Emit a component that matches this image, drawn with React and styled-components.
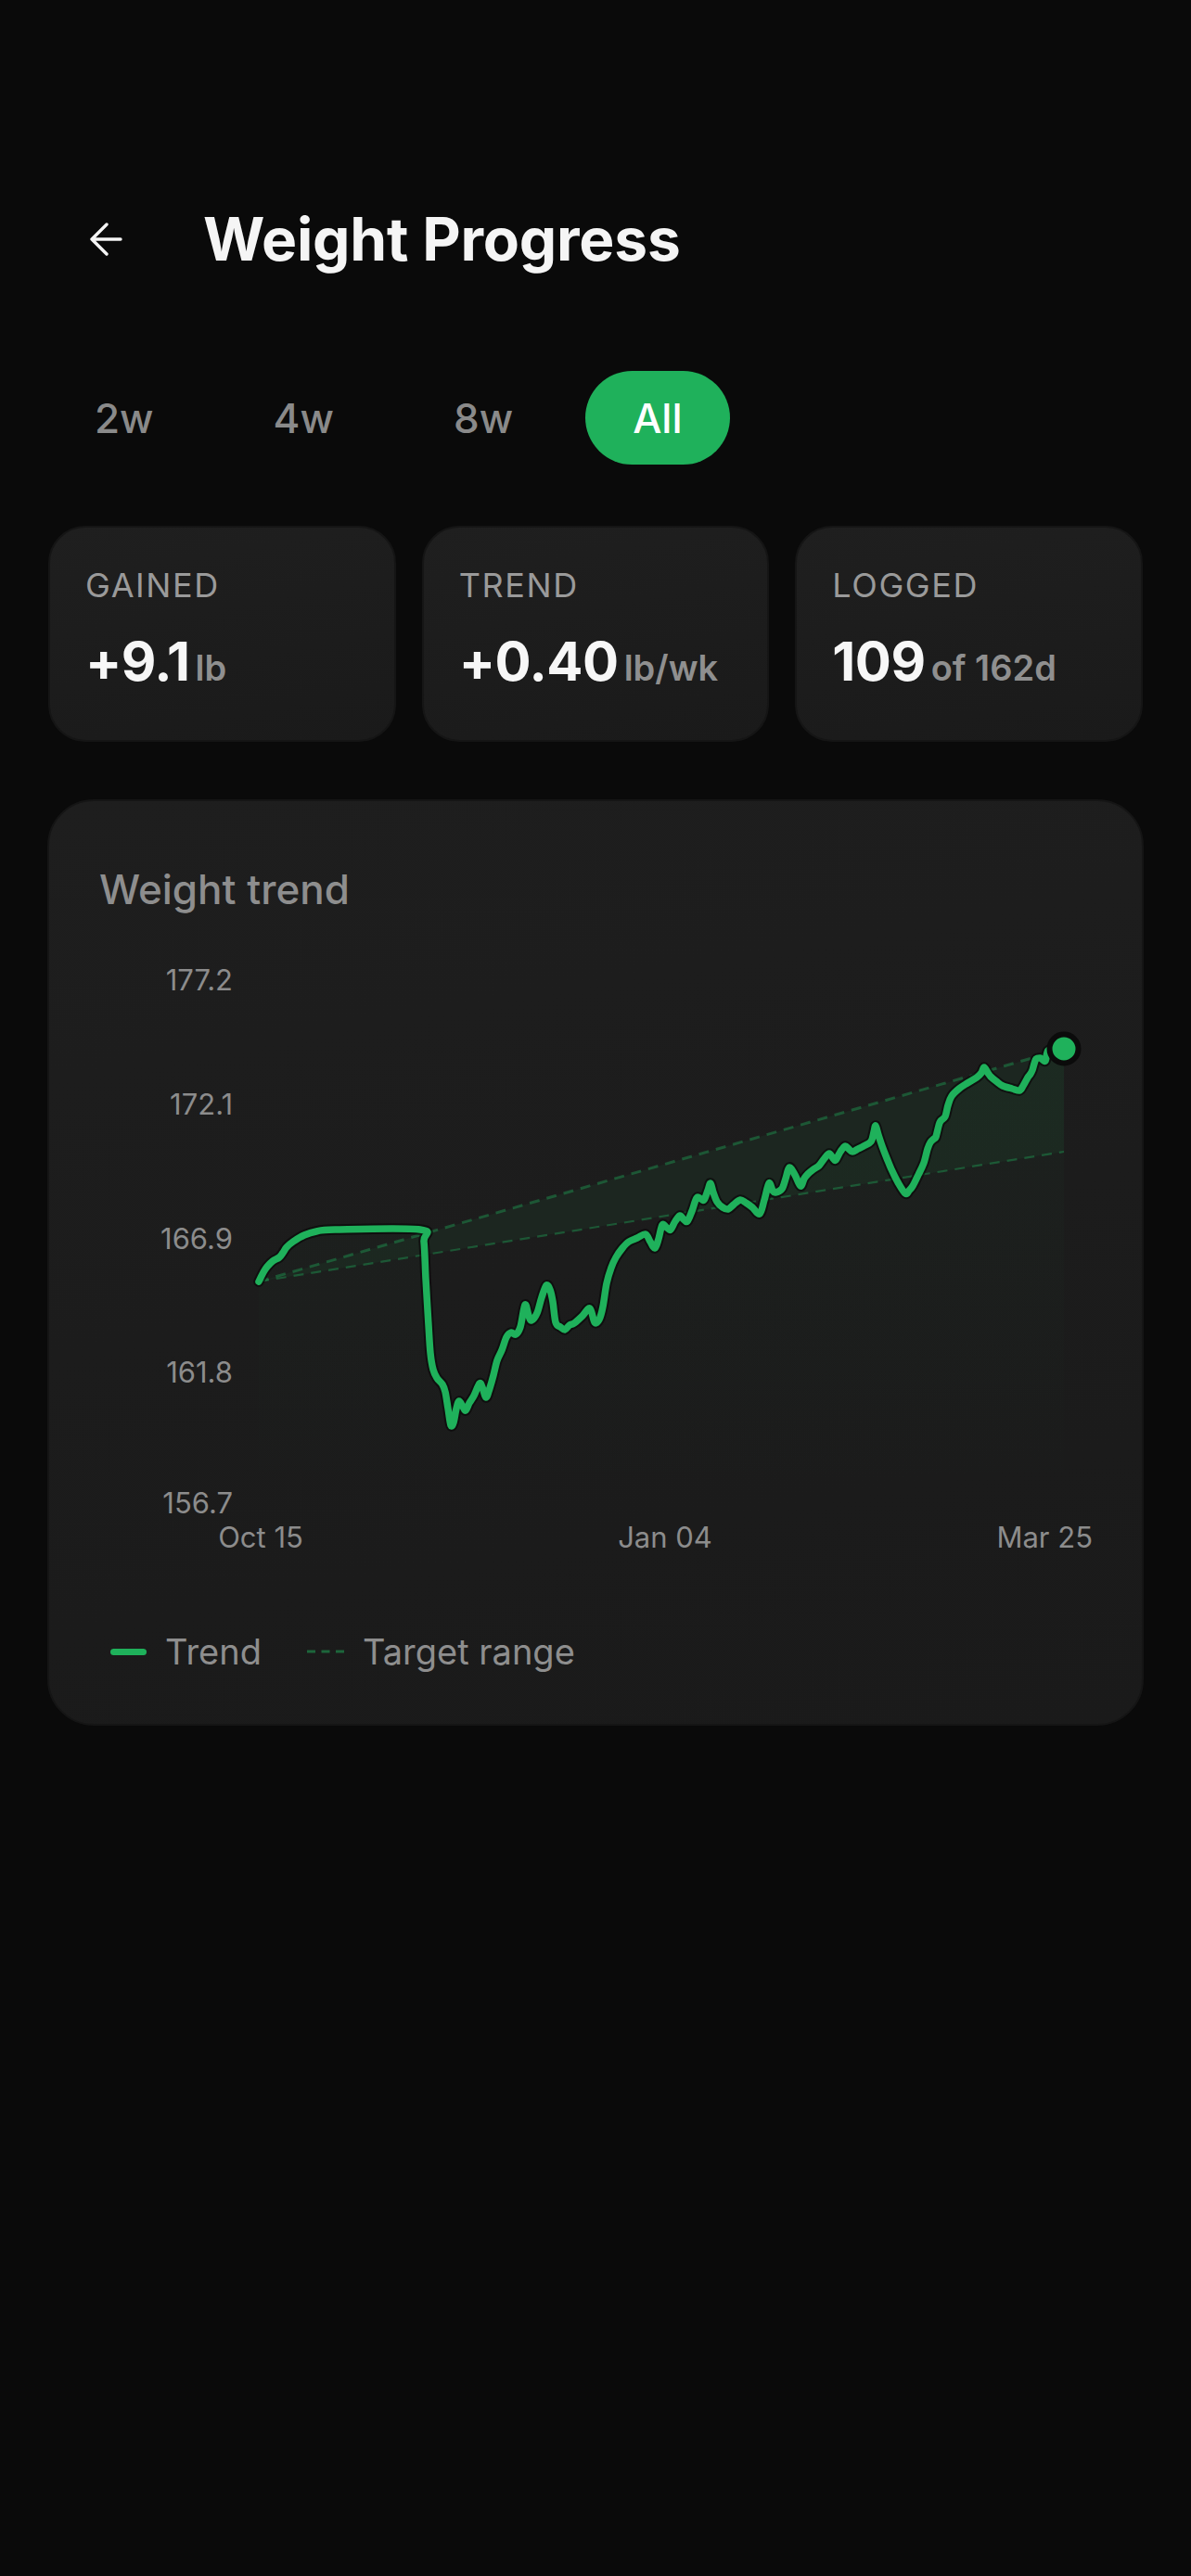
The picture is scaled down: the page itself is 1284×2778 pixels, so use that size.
import React from "react";
import styled, { createGlobalStyle } from "styled-components";

const GREEN = "#1fb15b";

const GlobalStyle = createGlobalStyle`
  html, body {
    margin: 0;
    padding: 0;
    background: #0a0a0a;
  }
  body {
    font-family: Inter, "Noto Sans", sans-serif;
    color: #f5f5f5;
    -webkit-font-smoothing: antialiased;
  }
`;

// trend points, in page pixels
const TREND = [
  [278, 1383], [283, 1373], [287, 1367], [293, 1361], [300, 1357], [304, 1352],
  [308, 1346], [315, 1340], [327, 1333], [340, 1329], [360, 1327], [452, 1327],
  [456, 1340], [458, 1380], [461, 1430], [463, 1460], [466, 1478], [470, 1487],
  [476, 1494], [479, 1502], [482, 1520], [485, 1538], [488, 1535], [491, 1520],
  [494, 1512], [498, 1518], [501, 1522], [505, 1514], [510, 1506], [516, 1493],
  [519, 1497], [523, 1508], [527, 1498], [531, 1484], [535, 1468], [540, 1457],
  [545, 1443], [550, 1438], [555, 1440], [560, 1432], [565, 1408], [569, 1420],
  [572, 1425], [578, 1417], [583, 1400], [588, 1387], [592, 1392], [595, 1405],
  [598, 1427], [603, 1432], [608, 1435], [613, 1430], [618, 1428], [627, 1420],
  [635, 1412], [640, 1427], [645, 1424], [649, 1410], [653, 1385], [658, 1368],
  [663, 1357], [670, 1347], [677, 1340], [686, 1336], [695, 1332], [700, 1340],
  [705, 1347], [709, 1337], [713, 1322], [718, 1325], [722, 1327], [727, 1318],
  [732, 1312], [736, 1316], [740, 1318], [745, 1307], [750, 1293], [755, 1294],
  [758, 1295], [762, 1285], [765, 1277], [768, 1287], [772, 1297], [778, 1303],
  [784, 1305], [790, 1300], [797, 1295], [803, 1298], [810, 1303], [818, 1310],
  [823, 1295], [828, 1277], [832, 1285], [835, 1287], [842, 1283], [846, 1272],
  [850, 1260], [856, 1268], [862, 1280], [866, 1272], [870, 1267], [876, 1262],
  [882, 1258], [888, 1250], [893, 1245], [897, 1250], [900, 1252], [905, 1243],
  [910, 1237], [914, 1240], [918, 1243], [924, 1240], [930, 1237], [938, 1232],
  [941, 1222], [943, 1215], [946, 1225], [950, 1237], [955, 1250], [960, 1262],
  [967, 1276], [975, 1288], [979, 1285], [983, 1280], [989, 1268], [995, 1255],
  [999, 1240], [1002, 1233], [1006, 1229], [1008, 1227], [1011, 1215], [1013, 1210],
  [1018, 1205], [1021, 1193], [1025, 1183], [1033, 1175], [1042, 1169], [1052, 1163],
  [1057, 1158], [1060, 1152], [1064, 1158], [1067, 1162], [1073, 1167], [1080, 1172],
  [1090, 1175], [1098, 1177], [1102, 1172], [1107, 1163], [1110, 1159], [1112, 1155],
  [1114, 1148], [1116, 1143], [1120, 1142], [1122, 1143], [1126, 1145], [1128, 1136],
  [1131, 1133], [1146, 1132],
];

const Y_LABELS = [
  { v: "177.2", y: 1069 },
  { v: "172.1", y: 1203 },
  { v: "166.9", y: 1348 },
  { v: "161.8", y: 1492 },
  { v: "156.7", y: 1633 },
];

function smoothPath(pts) {
  let d = `M${pts[0][0]},${pts[0][1]}`;
  for (let i = 0; i < pts.length - 1; i++) {
    const p0 = pts[i - 1] || pts[i];
    const p1 = pts[i];
    const p2 = pts[i + 1];
    const p3 = pts[i + 2] || p2;
    const c1x = p1[0] + (p2[0] - p0[0]) / 6;
    const c1y = p1[1] + (p2[1] - p0[1]) / 6;
    const c2x = p2[0] - (p3[0] - p1[0]) / 6;
    const c2y = p2[1] - (p3[1] - p1[1]) / 6;
    d += ` C${c1x.toFixed(1)},${c1y.toFixed(1)} ${c2x.toFixed(1)},${c2y.toFixed(1)} ${p2[0]},${p2[1]}`;
  }
  return d;
}

function App() {
  const trend = smoothPath(TREND);
  return (
    <>
      <GlobalStyle />
      <Page>
        <Header>
          <BackButton aria-label="Back">
            <svg width="36" height="36" viewBox="0 0 36 36" fill="none">
              <path
                d="M34 18H3M19 2L3 18L19 34"
                stroke="#f5f5f5"
                strokeWidth="3.4"
                strokeLinecap="round"
                strokeLinejoin="round"
              />
            </svg>
          </BackButton>
          <Title>Weight Progress</Title>
        </Header>

        <Tabs>
          <Tab>2w</Tab>
          <Tab>4w</Tab>
          <Tab>8w</Tab>
          <Tab $active>All</Tab>
        </Tabs>

        <Stats>
          <StatCard>
            <StatLabel>GAINED</StatLabel>
            <StatValue>
              +9.1<Unit>lb</Unit>
            </StatValue>
          </StatCard>
          <StatCard>
            <StatLabel>TREND</StatLabel>
            <StatValue>
              +0.40<Unit>lb/wk</Unit>
            </StatValue>
          </StatCard>
          <StatCard>
            <StatLabel>LOGGED</StatLabel>
            <StatValue>
              109<Unit>of 162d</Unit>
            </StatValue>
          </StatCard>
        </Stats>

        <ChartCard>
          <ChartTitle>Weight trend</ChartTitle>
          <Chart width="1071" height="670" viewBox="106 1020 1071 670">
            <defs>
              <linearGradient id="area" x1="0" y1="0" x2="0" y2="1">
                <stop offset="0" stopColor={GREEN} stopOpacity="0.035" />
                <stop offset="1" stopColor={GREEN} stopOpacity="0" />
              </linearGradient>
            </defs>
            <path d={`${trend} L1146,1620 L278,1620 Z`} fill="url(#area)" />
            <polygon
              points="278,1383 1146,1132 1146,1243"
              fill={GREEN}
              fillOpacity="0.07"
            />
            <line
              x1="278" y1="1383" x2="1146" y2="1132"
              stroke={GREEN} strokeOpacity="0.38" strokeWidth="3"
              strokeDasharray="11 8"
            />
            <line
              x1="278" y1="1383" x2="1146" y2="1243"
              stroke={GREEN} strokeOpacity="0.38" strokeWidth="2.2"
              strokeDasharray="11 8"
            />
            <path
              d={trend}
              fill="none"
              stroke="#0b0b0b"
              strokeOpacity="0.75"
              strokeWidth="11.5"
              strokeLinecap="round"
              strokeLinejoin="round"
            />
            <path
              d={trend}
              fill="none"
              stroke={GREEN}
              strokeWidth="7.5"
              strokeLinecap="round"
              strokeLinejoin="round"
            />
            <circle cx="1146" cy="1132" r="15.5" fill={GREEN} stroke="#0b0b0b" strokeWidth="6" />
            {Y_LABELS.map((l) => (
              <AxisText key={l.v} x="250" y={l.y} textAnchor="end">
                {l.v}
              </AxisText>
            ))}
            <AxisText x="280" y="1670" textAnchor="middle">Oct 15</AxisText>
            <AxisText x="716" y="1670" textAnchor="middle">Jan 04</AxisText>
            <AxisText x="1177" y="1670" textAnchor="end">Mar 25</AxisText>
          </Chart>
          <Legend>
            <LegendItem>
              <Swatch />
              Trend
            </LegendItem>
            <LegendItem>
              <svg width="40" height="6" viewBox="0 0 40 6">
                <line x1="0" y1="3" x2="40" y2="3" stroke={GREEN} strokeOpacity="0.5" strokeWidth="3" strokeDasharray="9 6.5" />
              </svg>
              Target range
            </LegendItem>
          </Legend>
        </ChartCard>
      </Page>
    </>
  );
}

const Page = styled.div`
  min-height: 2778px;
  box-sizing: border-box;
  padding: 218px 51px 0 51px;
`;

const Header = styled.header`
  display: flex;
  align-items: center;
  height: 80px;
  padding-left: 45px;
`;

const BackButton = styled.button`
  display: flex;
  align-items: center;
  justify-content: center;
  width: 36px;
  height: 36px;
  padding: 0;
  border: 0;
  background: none;
  cursor: pointer;
`;

const Title = styled.h1`
  margin: 0 0 0 87px;
  font-size: 64px;
  line-height: 80px;
  font-weight: 700;
  color: #f5f5f5;
  letter-spacing: -0.2px;
`;

const Tabs = styled.nav`
  display: flex;
  gap: 27px;
  margin-top: 102px;
`;

const Tab = styled.button`
  height: 101px;
  padding: 0 51px;
  border: 0;
  border-radius: 51px;
  font-family: Inter, sans-serif;
  font-size: 44px;
  font-weight: 500;
  color: ${(p) => (p.$active ? "#ffffff" : "#8a8a8a")};
  background: ${(p) => (p.$active ? GREEN : "transparent")};
  cursor: pointer;
`;

const Stats = styled.section`
  display: grid;
  grid-template-columns: repeat(3, 1fr);
  gap: 28px;
  margin-top: 66px;
  padding: 0 1px;
`;

const StatCard = styled.div`
  height: 233px;
  box-sizing: border-box;
  padding: 40px 38px;
  border-radius: 40px;
  border: 2px solid #151515;
  background: linear-gradient(170deg, #1f1f1f 0%, #1a1a1a 100%);
`;

const StatLabel = styled.div`
  font-size: 36px;
  line-height: 44px;
  letter-spacing: 1.6px;
  color: #9a9a9a;
`;

const StatValue = styled.div`
  display: flex;
  align-items: baseline;
  margin-top: 25px;
  font-size: 58px;
  line-height: 70px;
  font-weight: 700;
  color: #f7f7f7;
  letter-spacing: -0.5px;
`;

const Unit = styled.span`
  margin-left: 6px;
  font-size: 38px;
  font-weight: 600;
  color: #8f8f8f;
  letter-spacing: 0;
`;

const ChartCard = styled.section`
  margin-top: 62px;
  box-sizing: border-box;
  height: 999px;
  padding: 69px 54px 56px 54px;
  border-radius: 50px;
  border: 2px solid #151515;
  background: linear-gradient(170deg, #1e1e1e 0%, #1a1a1a 100%);
`;

const ChartTitle = styled.h2`
  margin: 0;
  font-size: 44px;
  line-height: 53px;
  font-weight: 500;
  color: #8e8e8e;
`;

const Chart = styled.svg`
  display: block;
  margin-top: 33px;
  overflow: visible;
`;

const AxisText = styled.text`
  font-family: Inter, sans-serif;
  font-size: 31px;
  fill: #8c8c8c;
`;

const Legend = styled.div`
  display: flex;
  align-items: center;
  gap: 49px;
  margin-top: 70px;
  padding-left: 12px;
`;

const LegendItem = styled.div`
  display: flex;
  align-items: center;
  gap: 20px;
  font-size: 38px;
  line-height: 44px;
  color: #8e8e8e;
`;

const Swatch = styled.span`
  display: block;
  width: 39px;
  height: 7px;
  border-radius: 4px;
  background: ${GREEN};
`;

export default App;
